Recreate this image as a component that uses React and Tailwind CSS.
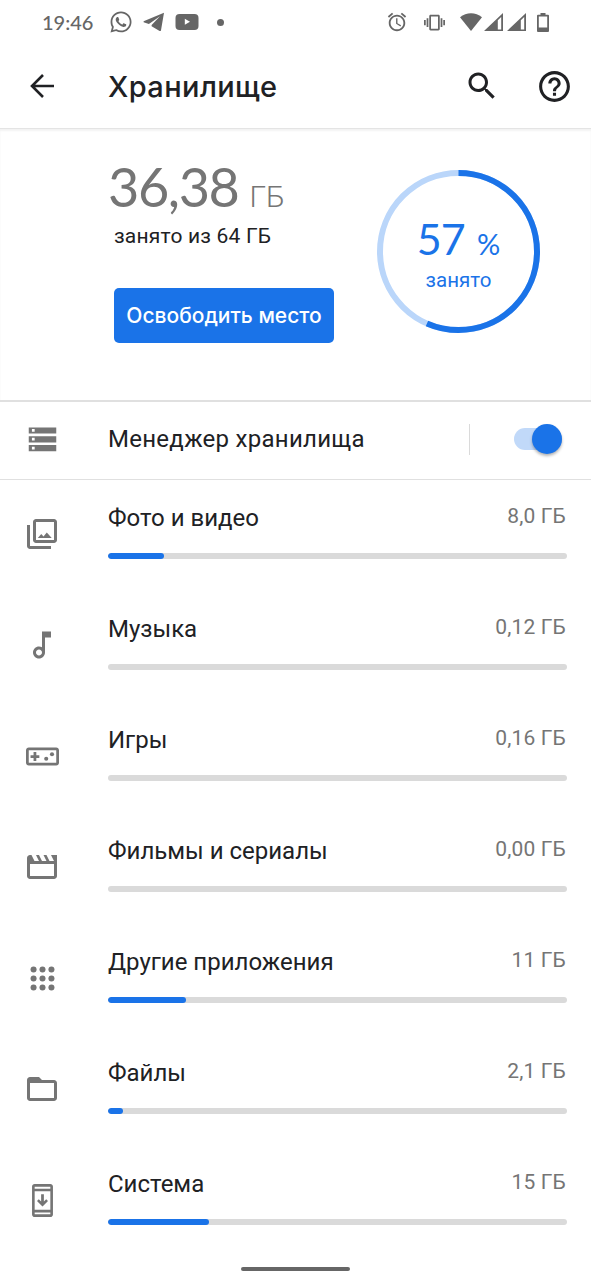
import clsx from 'clsx'
import { FaWhatsapp } from 'react-icons/fa'

const categories = [
  { label: 'Фото и видео',      value: '8,0 ГБ',  percent: 12.1, icon: PhotoIcon },
  { label: 'Музыка',            value: '0,12 ГБ', percent: 0,    icon: MusicIcon },
  { label: 'Игры',              value: '0,16 ГБ', percent: 0,    icon: GamesIcon },
  { label: 'Фильмы и сериалы',  value: '0,00 ГБ', percent: 0,    icon: MovieIcon },
  { label: 'Другие приложения', value: '11 ГБ',   percent: 17.1, icon: AppsIcon },
  { label: 'Файлы',             value: '2,1 ГБ',  percent: 3.2,  icon: FolderIcon },
  { label: 'Система',           value: '15 ГБ',   percent: 22.1, icon: SystemIcon },
]

function Icon({ className, children }) {
  return (
    <svg viewBox="0 0 24 24" fill="currentColor" className={clsx('shrink-0', className || 'size-[36px]')}>
      {children}
    </svg>
  )
}

function PhotoIcon() {
  return (
    <Icon>
      <path d="M20 2H8c-1.100 0-2 .9-2 2v12c0 1.100.9 2 2 2h12c1.100 0 2-.9 2-2V4c0-1.100-.9-2-2-2zm0 14H8V4h12v12zM2 6v14c0 1.100.9 2 2 2h14v-2H4V6H2z" />
      <path d="M9.200 14.700l2.300-2.700 1.500 1.600 2.200-2.600 3.300 3.700z" />
    </Icon>
  )
}

function MusicIcon() {
  return (
    <Icon>
      <path d="M12 3v10.550c-.59-.34-1.270-.55-2-.55-2.210 0-4 1.790-4 4s1.790 4 4 4 4-1.790 4-4V7h4V3h-6zm-2 16c-1.100 0-2-.9-2-2s.9-2 2-2 2 .9 2 2-.9 2-2 2z" />
    </Icon>
  )
}

function GamesIcon() {
  return (
    <Icon className="size-[33px]">
      <path d="M22 5.500H2c-1.100 0-2 .9-2 2v9c0 1.100.9 2 2 2h20c1.100 0 2-.9 2-2v-9c0-1.100-.9-2-2-2zm0 11H2v-9h20v9z" />
      <path d="M5.500 15.200h2v-2.200h2.200v-2H7.500V8.800h-2V11H3.300v2h2.200z" />
      <circle cx="14.700" cy="13.600" r="1.500" />
      <circle cx="18.900" cy="10.400" r="1.500" />
    </Icon>
  )
}

function MovieIcon() {
  return (
    <Icon>
      <path d="M18 4l2 4h-3l-2-4h-2l2 4h-3l-2-4H8l2 4H7L5 4H4c-1.100 0-1.990.9-1.990 2L2 18c0 1.100.9 2 2 2h16c1.100 0 2-.9 2-2V4h-4zm2 14H4v-8h16v8z" />
    </Icon>
  )
}

function AppsIcon() {
  return (
    <Icon className="size-[33px]">
      {[5.500, 12, 18.500].map(y => [5.500, 12, 18.500].map(x => (
        <circle key={`${x}-${y}`} cx={x} cy={y} r="2.200" />
      )))}
    </Icon>
  )
}

function FolderIcon() {
  return (
    <Icon>
      <path d="M20 6h-8l-2-2H4c-1.100 0-1.990.9-1.990 2L2 18c0 1.100.9 2 2 2h16c1.100 0 2-.9 2-2V8c0-1.100-.9-2-2-2zm0 12H4V8h16v10z" />
    </Icon>
  )
}

function SystemIcon() {
  return (
    <Icon className="size-[33px]">
      <path d="M17.700 0H6.300C5.200 0 4.400.8 4.400 1.900v20.200c0 1.100.8 1.900 1.900 1.900h11.400c1.100 0 1.900-.8 1.900-1.900V1.900C19.600.8 18.800 0 17.700 0zM17.700 22H6.300v-1.300h11.400V22zm0-3.200H6.300V5.300h11.400v13.500zm0-15.400H6.300V2h11.400v1.400z" />
      <path d="M16 12.300l-1.300-1.300-1.700 1.700V7.500h-2v5.200L9.300 11 8 12.300l4 4z" />
    </Icon>
  )
}

function StatusBar() {
  return (
    <div className="flex h-[44px] items-center pl-[42px] pr-[42px] text-[#666]">
      <span className="w-[67px] font-[Lato] text-[20px] font-medium">19:46</span>
      <FaWhatsapp className="size-[24px] shrink-0" />
      <svg viewBox="0 0 22 20" fill="currentColor" className="ml-[10px] h-[20px] w-[22px]">
        <path d="M21 .8L.6 9.200v1l5.300 1.900L17 4.300 8.600 13v1.200l8 4.700c.7.3 1.200.1 1.400-.7z" />
      </svg>
      <svg viewBox="0 0 24 18" className="ml-[10px] h-[18px] w-[24px]">
        <rect x=".5" y="1" width="23" height="16" rx="4" fill="currentColor" />
        <path d="M9.800 5.800v6l5.200-3z" fill="#fff" />
      </svg>
      <span className="ml-[18px] size-[7px] rounded-full bg-current" />
      <div className="ml-auto flex items-center">
        <Icon className="size-[22px]">
          <path d="M22 5.720l-4.600-3.860-1.290 1.530 4.600 3.860L22 5.720zM7.880 3.390L6.600 1.860 2 5.710l1.290 1.530 4.590-3.850zM12.500 8H11v6l4.750 2.850.75-1.230-4-2.370V8zM12 4c-4.970 0-9 4.030-9 9s4.020 9 9 9c4.970 0 9-4.030 9-9s-4.030-9-9-9zm0 16c-3.870 0-7-3.130-7-7s3.130-7 7-7 7 3.130 7 7-3.130 7-7 7z" />
        </Icon>
        <Icon className="ml-[16px] size-[21px]">
          <path d="M0 15h2V9H0v6zm3 2h2V7H3v10zm19-8v6h2V9h-2zm-3 8h2V7h-2v10zM16.500 3h-9C6.670 3 6 3.670 6 4.500v15c0 .83.67 1.500 1.500 1.500h9c.83 0 1.500-.67 1.500-1.500v-15c0-.83-.67-1.500-1.500-1.500zM16 19H8V5h8v14z" />
        </Icon>
        <svg viewBox="0 0 22 18" fill="currentColor" className="ml-[15px] h-[18px] w-[22px]">
          <path d="M0 4.200C6.500-1.200 15.500-1.200 22 4.200L11 18z" />
        </svg>
        <SignalIcon className="ml-[2px]" />
        <SignalIcon className="ml-[4px]" />
        <svg viewBox="0 0 12 19" fill="currentColor" className="ml-[11px] h-[19px] w-[12px]">
          <path fillRule="evenodd" d="M3.500 0h5v1.800H11q1 0 1 1V18q0 1-1 1H1q-1 0-1-1V2.800q0-1 1-1h2.500zM1.800 3.600v11h8.400v-11z" />
        </svg>
      </div>
    </div>
  )
}

function SignalIcon({ className }) {
  return (
    <svg viewBox="0 0 19 18" className={clsx('h-[18px] w-[19px]', className)}>
      <path fill="currentColor" fillRule="evenodd" d="M19 0v18H0zM13.800 7.200v9.300h3.400V4z" />
    </svg>
  )
}

function Header() {
  return (
    <header className="flex h-[84px] items-center pl-[25px] pr-[18px] text-[#202124]">
      <svg viewBox="0 0 33 33" fill="none" stroke="currentColor" strokeWidth="2.600" className="size-[33px]">
        <path d="M29 16H7M18 5l-11 11 11 11" />
      </svg>
      <h1 className="ml-[50px] flex-1 pt-[2px] font-[Inter] text-[29px] font-medium tracking-[0.4px]">Хранилище</h1>
      <Icon>
        <path d="M15.500 14h-.79l-.28-.27C15.410 12.590 16 11.110 16 9.500 16 5.910 13.090 3 9.500 3S3 5.910 3 9.500 5.910 16 9.500 16c1.610 0 3.090-.59 4.230-1.570l.27.28v.79l5 4.990L20.490 19l-4.990-5zm-6 0C7.010 14 5 11.990 5 9.500S7.010 5 9.500 5 14 7.010 14 9.500 11.990 14 9.500 14z" />
      </Icon>
      <Icon className="ml-[36px] size-[37px]">
        <path d="M11 18h2v-2h-2v2zm1-16C6.480 2 2 6.480 2 12s4.480 10 10 10 10-4.480 10-10S17.520 2 12 2zm0 18c-4.410 0-8-3.590-8-8s3.590-8 8-8 8 3.590 8 8-3.590 8-8 8zm0-14c-2.210 0-4 1.790-4 4h2c0-1.100.9-2 2-2s2 .9 2 2c0 2-3 1.750-3 5h2c0-2.250 3-2.500 3-5 0-2.210-1.790-4-4-4z" />
      </Icon>
    </header>
  )
}

function UsageRing({ percent }) {
  const radius = 78.5
  const length = 2 * Math.PI * radius

  return (
    <div className="relative size-[163px]">
      <svg viewBox="0 0 163 163" fill="none" strokeWidth="6" className="size-full -rotate-90">
        <circle cx="81.500" cy="81.500" r={radius} stroke="#bad6fa" />
        <circle cx="81.500" cy="81.500" r={radius} stroke="#1a73e8" strokeDasharray={`${(length * percent) / 100} ${length}`} />
      </svg>
      <div className="absolute inset-0 flex flex-col items-center pt-[44px] text-[#1a73e8]">
        <p className="flex items-baseline font-[Lato] leading-[50px]">
          <span className="text-[43px] tracking-[-0.8px]">57</span>
          <span className="ml-[12px] text-[29px]">%</span>
        </p>
        <p className="-mt-[3px] font-[Roboto] text-[20.5px] leading-[28px]">занято</p>
      </div>
    </div>
  )
}

function Summary() {
  return (
    <section className="flex h-[272px] border-t border-[#e4e4e4] pl-[108px] pr-[51px] shadow-[inset_0_2px_2px_rgba(0,0,0,0.05)]">
      <div className="flex-1">
        <p className="mt-[28px] flex h-[60px] items-baseline leading-[60px] text-[#757575]">
          <span className="font-[Lato] text-[54px] tracking-[-1.4px]">36,38</span>
          <span className="ml-[11px] font-[Roboto] text-[30px] font-light">ГБ</span>
        </p>
        <p className="ml-[6px] mt-[5px] font-[Roboto] text-[21px] leading-[28px] tracking-[0.2px] text-[#202124]">занято из 64 ГБ</p>
        <button className="ml-[6px] mt-[38px] flex h-[55px] w-[220px] items-center justify-center whitespace-nowrap rounded-[5px] bg-[#1a73e8] font-[Inter] text-[21px] font-medium text-white">
          Освободить место
        </button>
      </div>
      <div className="pt-[41px]">
        <UsageRing percent={56.5} />
      </div>
    </section>
  )
}

function ManagerRow() {
  return (
    <section className="flex h-[79px] items-center border-t-2 border-[#e0e0e0] pb-[3px] pl-[26px] pr-[29px]">
      <Icon className="size-[33px] text-[#757575]">
        <path d="M2 20.500h20v-4.500H2v4.500zM4.300 17.200h2v2h-2v-2zM2 3.200v4.500h20V3.200H2zM6.300 6.400h-2v-2h2v2zM2 14.100h20V9.600H2v4.500zM4.300 10.800h2v2h-2v-2z" />
      </Icon>
      <p className="ml-[49px] flex-1 font-[Roboto] text-[24px] tracking-[0.28px] text-[#202124]">Менеджер хранилища</p>
      <span className="h-[31px] w-px bg-[#dadada]" />
      <div className="relative ml-[44px] h-[22px] w-[48px] rounded-full bg-[#c1d9f9]">
        <span className="absolute -top-[4px] right-0 size-[30px] rounded-full bg-[#1a73e8] shadow-[0_2px_3px_rgba(0,0,0,0.3)]" />
      </div>
    </section>
  )
}

function CategoryRow({ category }) {
  return (
    <li className="flex h-[111px] pl-[24px] pr-[24px]">
      <div className="mt-[36px] flex size-[36px] items-center justify-center text-[#757575]">
        <category.icon />
      </div>
      <div className="ml-[48px] flex-1 pt-[24px] font-[Roboto]">
        <div className="flex h-[28px] justify-between">
          <span className="text-[24px] leading-[28px] text-[#202124]">{category.label}</span>
          <span className="pr-px text-[21px] leading-[24px] tracking-[0.15px] text-[#757575]">{category.value}</span>
        </div>
        <div className="mt-[21px] h-[6px] overflow-hidden rounded-full bg-[#dadada]">
          <div className="h-full rounded-full bg-[#1a73e8]" style={{ width: `${category.percent}%` }} />
        </div>
      </div>
    </li>
  )
}

export default function App() {
  return (
    <div className="flex h-[1280px] w-[591px] flex-col overflow-hidden bg-white">
      <StatusBar />
      <Header />
      <Summary />
      <ManagerRow />
      <ul className="border-t border-[#e0e0e0]">
        {categories.map(category => <CategoryRow key={category.label} category={category} />)}
      </ul>
      <div className="mx-auto mt-[10px] h-[4px] w-[109px] shrink-0 rounded-full bg-[#666]" />
    </div>
  )
}
